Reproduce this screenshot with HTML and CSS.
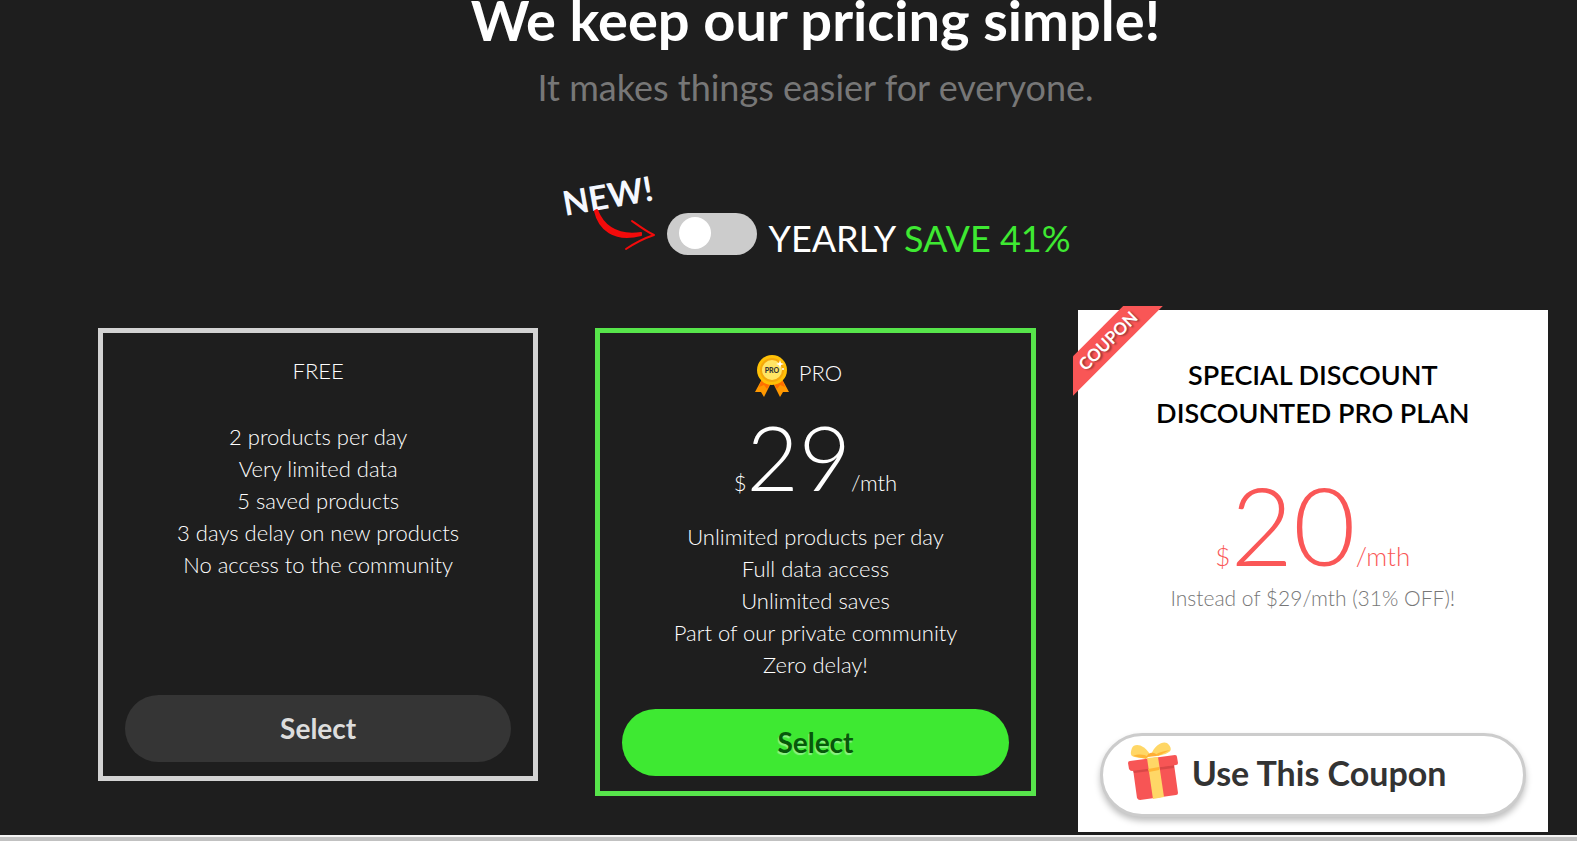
FILE: index.html
```
<!DOCTYPE html>
<html lang="en">
<head>
	<meta charset="utf-8">
	<title>Pricing</title>
	<link rel="stylesheet" href="styles.css">
</head>
<body>
  <main class="pricing">
    <h1>We keep our pricing simple!</h1>
    <p class="subtitle">It makes things easier for everyone.</p>

    <div class="billing">
      <svg class="new_arrow" viewBox="0 0 96 78" role="img" aria-label="New">
        <text x="5" y="38" transform="rotate(-10 5 38)">NEW!</text>
        <path d="M37 32 C42 45 54 59 81 55 L81 57 C54 64 39 51 35 33 Z" fill="#f30b0b" stroke="#f30b0b" stroke-width="2" stroke-linejoin="round"/>
        <path d="M72 43 C79 48 87 54 94 57 C85 60 75 65 66 71" fill="none" stroke="#f30b0b" stroke-width="2" stroke-linecap="round" stroke-linejoin="round"/>
      </svg>
      <input type="checkbox" id="yearly" class="switch">
      <label for="yearly">YEARLY <span class="save">SAVE 41%</span></label>
    </div>

    <div class="plans">
      <!-- free plan -->
      <section class="plan">
        <h2>FREE</h2>
        <ul class="features free_features">
          <li>2 products per day</li>
          <li>Very limited data</li>
          <li>5 saved products</li>
          <li>3 days delay on new products</li>
          <li>No access to the community</li>
        </ul>
        <button type="button" class="select">Select</button>
      </section>

      <!-- pro plan -->
      <section class="plan pro">
        <h2>
          <svg class="medal" viewBox="0 0 34 42" aria-hidden="true">
            <path d="M7 24 L0 37 L6 37 L9 42 L17 26 Z" fill="#ff9800"/>
            <path d="M27 24 L34 37 L28 37 L25 42 L17 26 Z" fill="#ff9800"/>
            <path d="M7 24 L4 32 L9 30 L12 34 L16 27 Z" fill="#ff6f00"/>
            <path d="M27 24 L30 32 L25 30 L22 34 L18 27 Z" fill="#ff6f00"/>
            <circle cx="17" cy="15" r="15" fill="#ffc107"/>
            <circle cx="17" cy="15" r="12" fill="#f5a80c"/>
            <circle cx="17" cy="15" r="10" fill="#ffe564"/>
            <text x="17" y="18">PRO</text>
            <path d="M25 5 L26 8 L29 9 L26 10 L25 13 L24 10 L21 9 L24 8 Z" fill="#fff"/>
            <circle cx="28" cy="14" r="1" fill="#fff"/>
          </svg>
          PRO
        </h2>
        <p class="price">$<strong>29</strong>/mth</p>
        <ul class="features">
          <li>Unlimited products per day</li>
          <li>Full data access</li>
          <li>Unlimited saves</li>
          <li>Part of our private community</li>
          <li>Zero delay!</li>
        </ul>
        <button type="button" class="select">Select</button>
      </section>

      <!-- coupon -->
      <section class="coupon">
        <div class="ribbon"><span>COUPON</span></div>
        <h2>SPECIAL DISCOUNT<br>DISCOUNTED PRO PLAN</h2>
        <p class="price">$<strong>20</strong>/mth</p>
        <p class="note">Instead of $29/mth (31% OFF)!</p>
        <button type="button" class="use_coupon">
          <svg class="gift" viewBox="0 0 50 58" aria-hidden="true">
            <path d="M23 14 C16 1 6 1 4 6 C3 9 2 12 4 14 C8 16 15 17 23 14 Z" fill="#ffd766"/>
            <path d="M23 13 C27 2 35 -1 39 1 C43 4 44 8 41 10 C37 13 30 14 23 14 Z" fill="#ffd766"/>
            <path d="M5 14 C10 12 16 12 20 15 L18 17 Z" fill="#ffb636"/>
            <path d="M42 8 C37 9 31 10 27 13 L30 14 Z" fill="#ffb636"/>
            <path d="M19 15 C19 10 28 9 29 14 Z" fill="#ffae35"/>
            <path d="M5 27 L46 22 L50 51 Q50 53 48 53 L12 58 Q10 58 9 56 Z" fill="#f75555"/>
            <path d="M5 28 L46 23 L46 26 L6 31 Z" fill="#d94747"/>
            <path d="M2 19 L47 13 Q49 13 49 15 L50 21 Q50 23 48 23 L4 29 Q2 29 1 27 L0 21 Q0 19 2 19 Z" fill="#f75555"/>
            <path d="M19 16 L30 15 L36 55 L25 57 Z" fill="#ffd766"/>
            <path d="M20 27 L31 25 L31 28 L21 30 Z" fill="#ffb636"/>
          </svg>
          Use This Coupon
        </button>
      </section>
    </div>
  </main>
  <div class="page_end"></div>
</body>
</html>
```
FILE: styles.css
```
* {
	box-sizing: border-box;
}

body {
	margin: 0;
	background-color: #1e1e1e;
	font-family: Lato, sans-serif;
	font-size: 22px;
	line-height: 32px;
	color: #fff;
	text-align: center;
}

h1, h2, p, ul {
	margin: 0;
	padding: 0;
}

.pricing {
	padding: 0 44px 3px 98px;
}

h1 {
	font-size: 56px;
	line-height: 40px;
	font-weight: 700;
}

.subtitle {
	margin-top: 25px;
	font-size: 36px;
	line-height: 44px;
	color: #777;
}

/* monthly / yearly switch */
.billing {
	display: flex;
	justify-content: center;
	align-items: flex-end;
	gap: 11px;
	margin: 69px 0 72px;
	font-size: 36px;
	line-height: 36px;
}

.new_arrow {
	width: 96px;
	height: 78px;
	overflow: visible;
}

.new_arrow text {
	font-size: 34px;
	font-weight: 700;
	fill: #f5f8ff;
}

.switch {
	appearance: none;
	width: 90px;
	height: 42px;
	margin: 0 0 1px;
	padding: 4px 12px;
	border-radius: 21px;
	background-color: #ccc;
	cursor: pointer;
}

.switch::before {
	content: "";
	display: block;
	width: 32px;
	height: 32px;
	border-radius: 50%;
	background-color: #fff;
}

.switch:checked {
	background-color: #3ee932;
}

.switch:checked::before {
	margin-left: auto;
}

.save {
	color: #3ee932;
}

/* cards */
.plans {
	display: grid;
	grid-template-columns: repeat(3, 1fr);
	align-items: start;
	gap: 57px;
}

.plan {
	padding: 22px 22px 14px;
	border: 5px solid #d3d3d3;
}

.pro {
	padding-bottom: 15px;
	border-color: #57e54b;
}

.plan h2 {
	font-size: 22px;
	font-weight: 300;
}

.pro h2 {
	padding-right: 34px;
}

.medal {
	width: 34px;
	height: 42px;
	margin-right: 4px;
	vertical-align: middle;
}

.medal text {
	font-size: 7px;
	font-weight: 900;
	text-anchor: middle;
	fill: #333;
}

.price {
	margin-top: 14px;
	font-weight: 300;
}

.price strong {
	font-size: 90px;
	font-weight: 300;
	line-height: 90px;
}

.features {
	margin: 20px 0 28px;
	list-style: none;
	font-weight: 300;
}

.free_features {
	min-height: 246px;
	margin-top: 34px;
}

button {
	display: block;
	width: 100%;
	font-family: inherit;
	cursor: pointer;
}

.select {
	height: 67px;
	padding: 0 0 2px;
	border: none;
	border-radius: 34px;
	background-color: #353535;
	color: #ddd;
	font-size: 28px;
	font-weight: 700;
}

.pro .select {
	background-color: #3ee932;
	color: #06580a;
	text-shadow: -1px 2px 1px rgba(255, 255, 255, 0.4);
}

.coupon {
	position: relative;
	margin: -18px -15px 0;
	padding: 46px 22px 15px;
	background-color: #fff;
	color: #000;
}

.coupon h2 {
	font-size: 27px;
	line-height: 38px;
	font-weight: 600;
}

.coupon .price {
	margin-top: 38px;
	font-size: 26px;
	color: #fa5757;
}

.coupon .price strong {
	font-size: 108px;
	line-height: 108px;
}

.note {
	margin: 4px 0 119px;
	font-size: 21px;
	font-weight: 300;
	color: #777;
}

.use_coupon {
	display: flex;
	align-items: center;
	gap: 14px;
	height: 84px;
	padding: 0 25px 6px;
	border: 3px solid #ccc;
	border-radius: 42px;
	background-color: #fff;
	box-shadow: 0 4px 6px rgba(0, 0, 0, 0.25);
	color: #333;
	font-size: 34px;
	font-weight: 700;
}

.gift {
	width: 50px;
	height: 58px;
	margin-bottom: 3px;
}

/* corner ribbon */
.ribbon {
	position: absolute;
	top: -4px;
	left: -5px;
	width: 90px;
	height: 90px;
	overflow: hidden;
}

.ribbon span {
	position: absolute;
	top: 21px;
	left: -35px;
	width: 140px;
	transform: rotate(-45deg);
	background-color: #f95656;
	color: #fff;
	font-size: 17px;
	font-weight: 700;
	line-height: 28px;
	text-shadow: 1px 2px 2px rgba(0, 0, 0, 0.4);
}

.page_end {
	height: 6px;
	border-top: 2px solid #f5f5f5;
	background-color: #c1c1c1;
}
```
